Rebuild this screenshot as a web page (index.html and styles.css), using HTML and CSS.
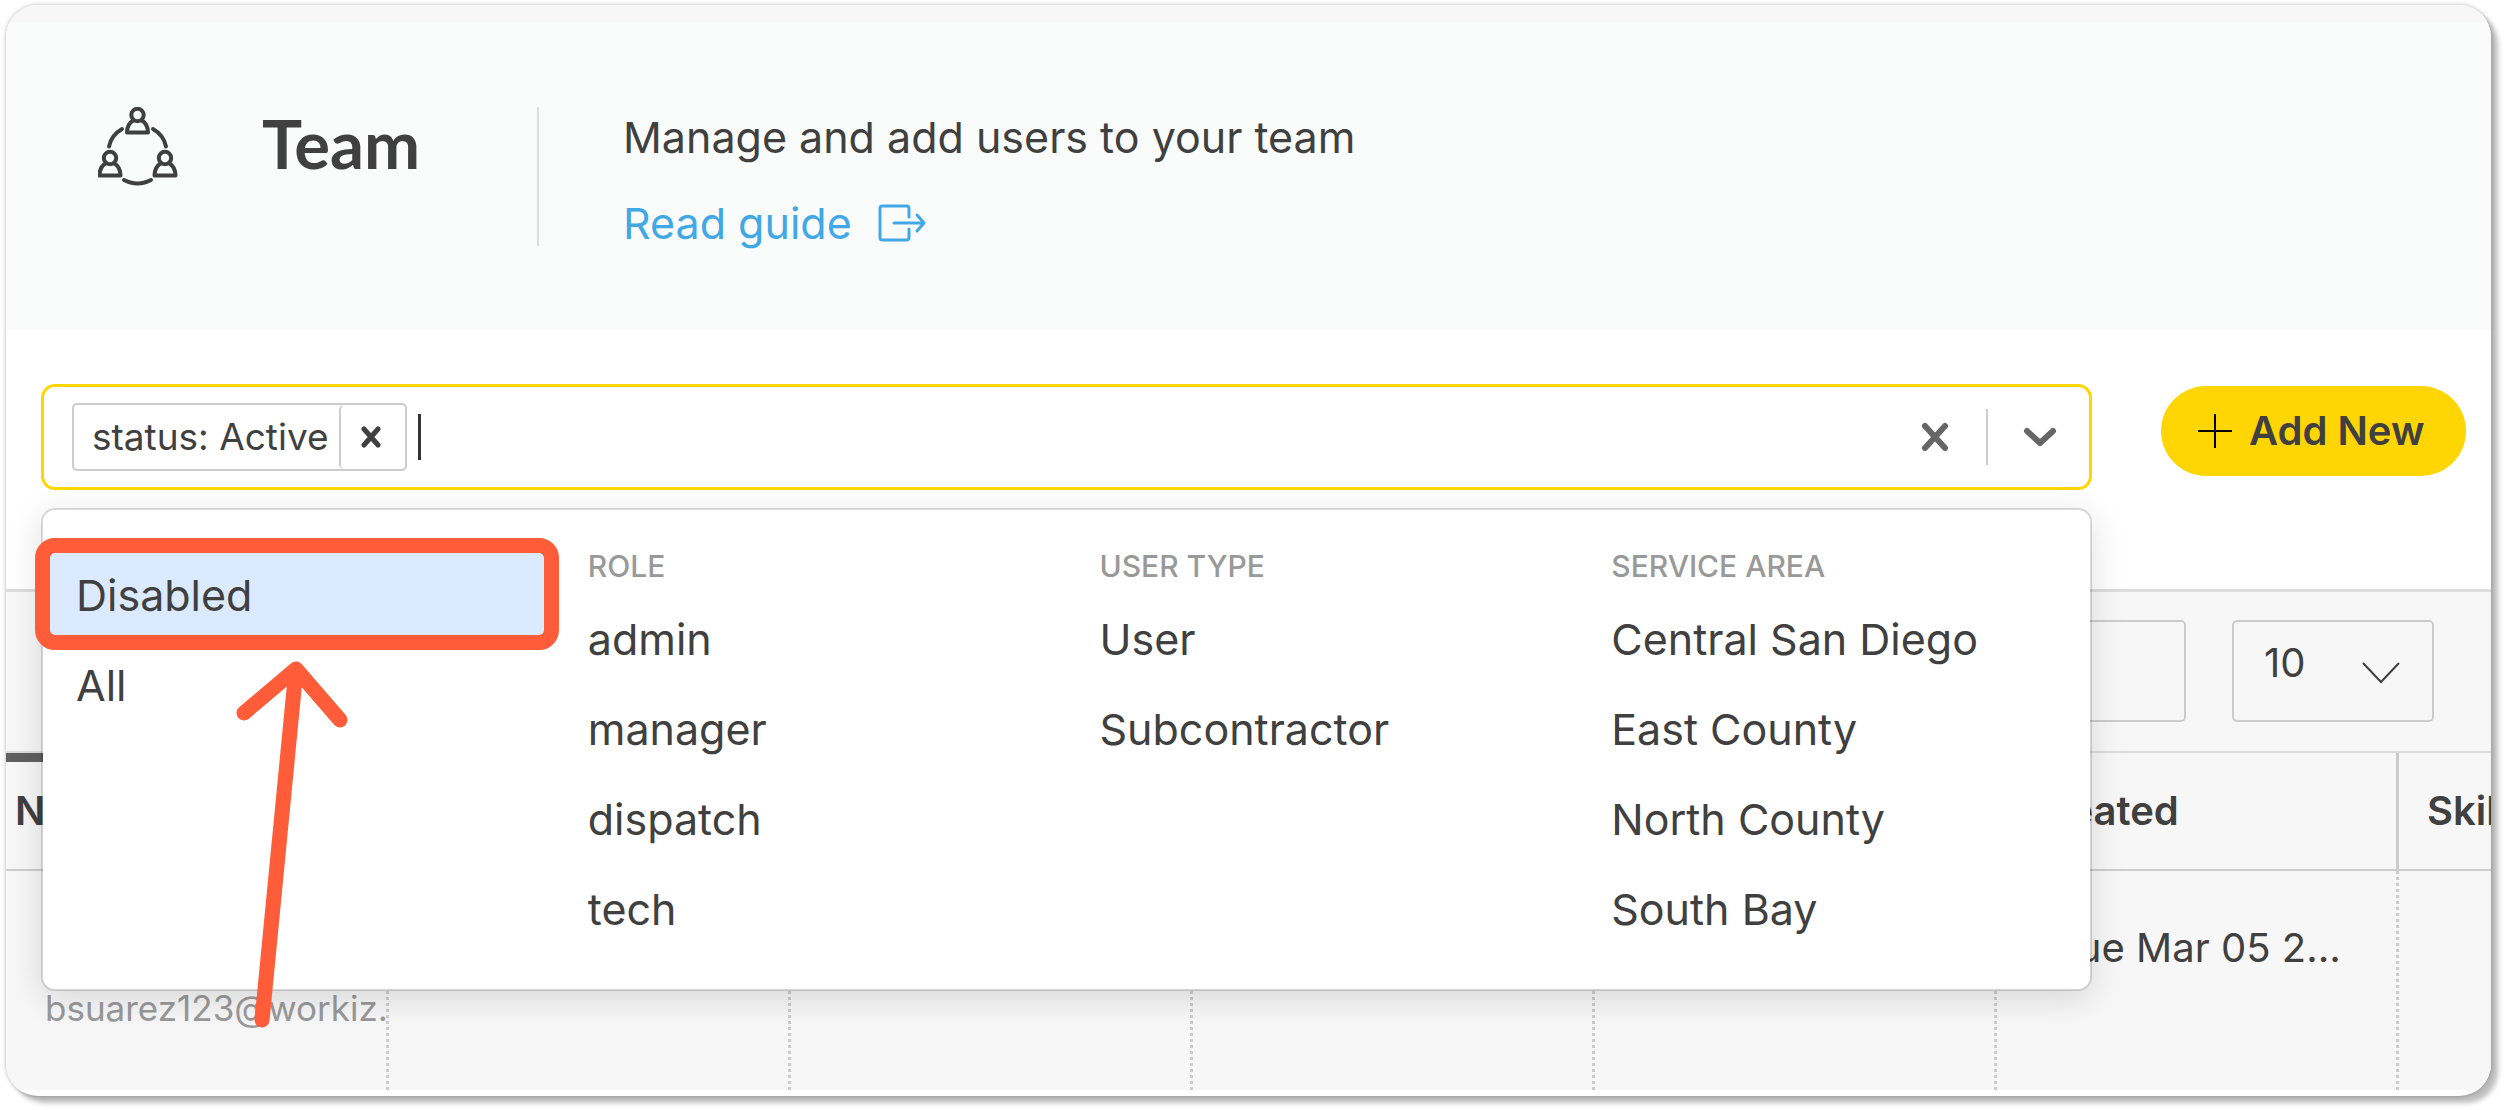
FILE: index.html
```html
<!DOCTYPE html>
<html lang="en">
<head>
  <meta charset="UTF-8">
  <meta name="viewport" content="width=device-width, initial-scale=1.0">
  <title>Team</title>
  <link rel="stylesheet" href="styles.css">
</head>
<body>
  <main class="card">
    <!-- Page header -->
    <header class="page-header">
      <svg class="team-icon" viewBox="0 0 80 80" fill="none" stroke="#404040" stroke-width="4" stroke-linecap="round" stroke-linejoin="round">
        <g id="person">
          <circle cx="39.500" cy="8" r="6.200"/>
          <path d="M35 13.500C31 16 29 20 29 25.500h21c0-5.500-2-9.500-6-12"/>
        </g>
        <use href="#person" x="-27.500" y="43"/>
        <use href="#person" x="27.500" y="43"/>
        <path d="M24 22C17 26 12.500 32 11 39.500M55 22C62 26 66.500 32 68 39.500M26 73c8 4.500 19 4.500 27 0"/>
      </svg>
      <h1>Team</h1>
      <div class="intro">
        <p>Manage and add users to your team</p>
        <a href="#guide">Read guide
          <svg class="guide-icon" viewBox="0 0 48 38" fill="none" stroke="currentColor" stroke-width="3" stroke-linecap="round" stroke-linejoin="round">
            <path d="M31 13V4.500Q31 2 28.500 2H4.500Q2 2 2 4.500v29Q2 36 4.500 36h24q2.500 0 2.500-2.500V25M16 19h30M39 11l7 8-7 8"/>
          </svg>
        </a>
      </div>
    </header>

    <!-- Filter -->
    <section class="toolbar">
      <div class="filter">
        <div class="filter-box">
          <div class="tag">
            <span>status: Active</span>
            <button aria-label="Remove status filter">
              <svg width="20" height="22" viewBox="0 0 20 22" stroke="#404040" stroke-width="5" stroke-linecap="round"><path d="M3 3l14 16M17 3L3 19"/></svg>
            </button>
          </div>
          <input class="filter-input" type="text" aria-label="Filter users">
          <button class="clear" aria-label="Clear filters">
            <svg width="28" height="30" viewBox="0 0 28 30" stroke="#666" stroke-width="6" stroke-linecap="round"><path d="M4 4l20 22M24 4L4 26"/></svg>
          </button>
          <button class="toggle" aria-label="Toggle filters">
            <svg width="34" height="20" viewBox="0 0 34 20" fill="none" stroke="#666" stroke-width="6" stroke-linecap="round" stroke-linejoin="round"><path d="M4 4l13 12L30 4"/></svg>
          </button>
        </div>

        <div class="menu">
          <div class="group">
            <button class="option selected">Disabled<span class="frame"></span></button>
            <button class="option">All</button>
          </div>
          <div class="group">
            <h2>ROLE</h2>
            <button class="option">admin</button>
            <button class="option">manager</button>
            <button class="option">dispatch</button>
            <button class="option">tech</button>
          </div>
          <div class="group">
            <h2>USER TYPE</h2>
            <button class="option">User</button>
            <button class="option">Subcontractor</button>
          </div>
          <div class="group">
            <h2>SERVICE AREA</h2>
            <button class="option">Central San Diego</button>
            <button class="option">East County</button>
            <button class="option">North County</button>
            <button class="option">South Bay</button>
          </div>
          <svg class="arrow" viewBox="0 0 120 380" fill="none" stroke="#ff5c39" stroke-width="15" stroke-linecap="round" stroke-linejoin="round">
            <path d="M28 360L62 9M10 53L62 9L106 60"/>
          </svg>
        </div>
      </div>
      <button class="add-new">
        <svg width="36" height="36" viewBox="0 0 36 36" stroke="#000" stroke-width="2"><path d="M18 1v34M1 18h34"/></svg>
        Add New
      </button>
    </section>

    <!-- Users table -->
    <section class="list">
      <div class="list-tools">
        <input class="search" type="text" aria-label="Search">
        <div class="page-size">
          <select aria-label="Rows per page">
            <option>10</option>
          </select>
          <svg width="38" height="22" viewBox="0 0 38 22" fill="none" stroke="#404040" stroke-width="2"><path d="M1 1l18 19L37 1"/></svg>
        </div>
      </div>
      <table>
        <thead>
          <tr>
            <th class="sorted">Name</th>
            <th></th>
            <th></th>
            <th></th>
            <th></th>
            <th>Created</th>
            <th>Skills</th>
          </tr>
        </thead>
        <tbody>
          <tr>
            <td><div class="line"></div><div class="email">bsuarez123@workiz.</div></td>
            <td></td>
            <td></td>
            <td></td>
            <td></td>
            <td><div class="line">Tue Mar 05 2…</div></td>
            <td></td>
          </tr>
        </tbody>
      </table>
    </section>
  </main>
</body>
</html>
```
FILE: styles.css
```css
* {
  box-sizing: border-box;
}

body {
  margin: 0;
  background: #fff;
  color: #404040;
  font-family: Inter, "Liberation Sans", sans-serif;
  font-size: 40px;
  line-height: 50px;
}

button, input, select {
  font: inherit;
  color: inherit;
  background: none;
  border: none;
  padding: 0;
  margin: 0;
  outline: none;
}

button {
  cursor: pointer;
}

svg {
  display: block;
}

.card {
  margin: 5px 14px 14px 6px;
  border-radius: 32px;
  overflow: hidden;
  background: #fff;
  box-shadow: 0 0 4px rgba(0, 0, 0, 0.3), 7px 7px 5px #bfbfbf;
}

/* header */
.page-header {
  display: flex;
  height: 325px;
  padding: 85px 92px 0;
  border-top: 17px solid #f7f7f7;
  background: #fafcfb;
}

.team-icon {
  width: 80px;
  height: 80px;
}

h1 {
  width: 275px;
  margin: 0 0 0 84px;
  font-family: Lato, sans-serif;
  font-size: 67px;
  font-weight: 700;
  line-height: 72px;
}

.intro {
  height: 139px;
  padding-left: 84px;
  border-left: 2px solid #dcdcdc;
  font-size: 43px;
}

.intro p {
  margin: 5px 0 36px;
}

.intro a {
  display: flex;
  align-items: center;
  gap: 26px;
  color: #41a8e5;
  text-decoration: none;
}

.guide-icon {
  width: 48px;
  height: 38px;
}

/* filter */
.toolbar {
  display: flex;
  align-items: flex-start;
  gap: 69px;
  padding: 54px 25px 99px 35px;
}

.filter {
  position: relative;
  flex: 1;
}

.filter-box {
  display: flex;
  align-items: center;
  height: 106px;
  padding: 0 32px 0 28px;
  border: 3px solid #ffd504;
  border-radius: 14px;
}

.tag {
  display: flex;
  height: 68px;
  border: 2px solid #ccc;
  border-radius: 5px;
  font-size: 37px;
  line-height: 64px;
}

.tag span {
  padding: 0 10px 0 18px;
}

.tag button {
  width: 66px;
  padding-left: 20px;
  border-left: 2px solid #ccc;
  border-radius: 5px;
}

.filter-input {
  flex: 1;
  height: 46px;
  margin-left: 11px;
  border-left: 3px solid #333;
}

.clear {
  padding-right: 37px;
}

.toggle {
  padding: 18px 0 18px 35px;
  border-left: 2px solid #ccc;
}

.menu {
  position: absolute;
  z-index: 2;
  top: 124px;
  left: 0;
  right: 0;
  display: grid;
  grid-template-columns: repeat(4, 1fr);
  padding: 40px 0 35px;
  border: 2px solid rgba(0, 0, 0, 0.14);
  border-radius: 14px;
  background: #fff;
  background-clip: padding-box;
  box-shadow: 0 8px 34px rgba(0, 0, 0, 0.13);
}

.group h2 {
  margin: 0 0 12px;
  padding-left: 33px;
  color: #999;
  font-size: 30px;
  font-weight: 500;
  line-height: 32px;
}

.option {
  position: relative;
  display: block;
  width: 100%;
  height: 90px;
  padding-left: 33px;
  font-size: 43px;
  text-align: left;
}

.selected {
  background: #dbeafe;
}

.frame {
  position: absolute;
  inset: -12px -4px -10px -8px;
  border: 15px solid #ff5c39;
  border-radius: 20px;
}

.arrow {
  position: absolute;
  top: 150px;
  left: 191px;
  width: 120px;
  height: 380px;
}

.add-new {
  display: flex;
  align-items: center;
  gap: 16px;
  width: 305px;
  height: 90px;
  margin-top: 2px;
  padding-left: 36px;
  border-radius: 45px;
  background: #ffd504;
  font-weight: 600;
  white-space: nowrap;
}

/* table */
.list {
  padding-bottom: 6px;
  border-top: 3px solid #dcdcdc;
}

.list-tools {
  display: flex;
  justify-content: flex-end;
  gap: 46px;
  height: 161px;
  padding: 28px 57px 0 0;
  border-bottom: 2px solid #dcdcdc;
  background: #f7f7f7;
}

.search {
  width: 520px;
  height: 102px;
  border: 2px solid #ccc;
  border-radius: 5px;
}

.page-size {
  position: relative;
  width: 202px;
  height: 102px;
}

.page-size select {
  width: 100%;
  height: 100%;
  padding: 0 30px 16px;
  border: 2px solid #ccc;
  border-radius: 5px;
  appearance: none;
}

.page-size svg {
  position: absolute;
  top: 42px;
  right: 34px;
  pointer-events: none;
}

table {
  width: 2814px;
  margin-left: -19px;
  table-layout: fixed;
  border-collapse: separate;
  border-spacing: 0;
  background: #f7f7f7;
}

th {
  height: 118px;
  padding: 0 28px;
  border-right: 3px solid #ccc;
  border-bottom: 2px solid #ccc;
  font-weight: 600;
  text-align: left;
}

.sorted {
  box-shadow: inset 0 9px #606060;
}

td {
  height: 219px;
  padding: 52px 0 0 58px;
  border-right: 3px dotted #ccc;
  vertical-align: top;
  white-space: nowrap;
  overflow: hidden;
}

.line {
  height: 50px;
}

.email {
  padding-top: 10px;
  color: #999;
  font-size: 35px;
}
```
